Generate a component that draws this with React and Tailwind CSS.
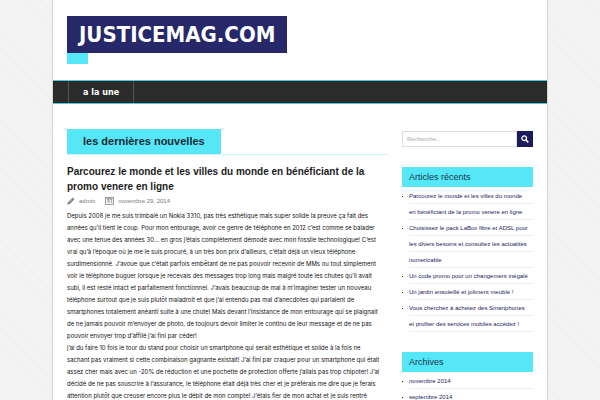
import React, { useState } from 'react';

const recentPosts = [
  'Parcourez le monde et les villes du monde en bénéficiant de la promo venere en ligne',
  'Choisissez le pack LaBox fibre et ADSL pour les divers besoins et consultez les actualités numericable',
  'Un code promo pour un changement inégalé',
  'Un jardin ensoleillé et joliment meublé !',
  'Vous cherchez à achetez des Smartphones et profiter des services mobiles accédez !',
];

const archives = ['novembre 2014', 'septembre 2014'];

function PencilIcon() {
  return (
    <svg viewBox="0 0 8 8" className="h-2 w-2" aria-hidden="true">
      <path d="M0.3 7.7 L1 5.3 L5.8 0.5 L7.5 2.2 L2.7 7 Z" fill="#777" />
      <path d="M1.6 6 L6.2 1.4" stroke="#ddd" strokeWidth="0.6" />
    </svg>
  );
}

function DateIcon() {
  return (
    <svg viewBox="0 0 9 8" className="h-2 w-[9px]" aria-hidden="true">
      <rect x="0.5" y="0.5" width="8" height="7" fill="#f2f2f2" stroke="#8a8a8a" strokeWidth="0.8" />
      <path d="M2 2.5 H4 V5.8 M2 4 H4 M5.2 2.5 H7 L6 5.8 M1.5 1.5 H7.5" fill="none" stroke="#888" strokeWidth="0.7" />
    </svg>
  );
}

function SearchIcon() {
  return (
    <svg viewBox="0 0 8 8" className="h-2 w-2" aria-hidden="true">
      <circle cx="3.2" cy="3.2" r="2.3" fill="none" stroke="#fff" strokeWidth="1.3" />
      <path d="M5 5 L7.3 7.3" stroke="#fff" strokeWidth="1.7" />
    </svg>
  );
}

function Widget({ title, items }) {
  return (
    <section>
      <h3 className="bg-[#55e7f7] px-[7px] text-[9px] leading-5 text-[#17364a]">{title}</h3>
      <ul className="mt-px">
        {items.map((item) => (
          <li key={item} className="flex text-[6px] leading-4">
            <span className="mt-2 mr-[6px] h-px w-px shrink-0 bg-[#222]"></span>
            <a
              href="#"
              className="grow bg-[repeating-linear-gradient(to_bottom,transparent_0px,transparent_15px,#f1f1f1_15px,#f1f1f1_16px)] pr-1 text-[#22225e]"
            >
              {item}
            </a>
          </li>
        ))}
      </ul>
    </section>
  );
}

function App() {
  const [search, setSearch] = useState('');

  return (
    <div className="h-screen overflow-hidden bg-[#f2f2f2] bg-[repeating-linear-gradient(45deg,#f5f5f5_0px,#f5f5f5_2px,#efefef_2px,#efefef_3px)] px-[52px] font-['Liberation_Sans',Arial,sans-serif]">
      <div className="min-h-full border-x border-[#d6d6d6] bg-white">
        <header className="px-[14px] pt-4">
          <h1 className="w-fit bg-[#26286a] px-3 font-['DejaVu_Sans_Condensed','DejaVu_Sans',sans-serif] text-[22px] leading-[37px] font-bold text-white">
            <a href="#">JUSTICEMAG.COM</a>
          </h1>
          <div className="h-[11px] w-[21px] bg-[#55e7f7]"></div>
        </header>

        <nav className="mt-4 flex border-y border-[#45cdda] bg-[#2b2b2b] pl-[15px]">
          <a
            href="#"
            className="border-x border-[#555] px-[14px] font-['DejaVu_Sans_Condensed','DejaVu_Sans',sans-serif] text-[9px] leading-[22px] font-bold text-white"
          >
            a la une
          </a>
        </nav>

        <div className="flex gap-[14px] px-[14px] pt-[25px]">
          <main className="min-w-0 flex-1">
            <div className="border-b border-[#c9f6fb]">
              <h2 className="w-fit bg-[#55e7f7] px-4 text-[11px] leading-[25px] font-bold text-[#142a33]">
                les dernières nouvelles
              </h2>
            </div>

            <article>
              <h2 className="mt-[9px] text-[10px] leading-[15px] font-bold text-[#1c1c1c]">
                <a href="#">Parcourez le monde et les villes du monde en bénéficiant de la promo venere en ligne</a>
              </h2>
              <div className="mt-px flex items-center text-[6px] leading-3 text-[#777]">
                <PencilIcon />
                <span className="ml-1">admin</span>
                <span className="ml-[10px]"><DateIcon /></span>
                <span className="ml-1">novembre 29, 2014</span>
              </div>
              <div className="mt-[3px] pr-[5px] font-[Inter,'Liberation_Sans',sans-serif] text-[6px] leading-3 text-[#111]">
                <p>
                  Depuis 2008 je me suis trimbalé un Nokia 3310, pas très esthétique mais super solide la preuve ça fait des
                  années qu’il tient le coup. Pour mon entourage, avoir ce genre de téléphone en 2012 c’est comme se balader
                  avec une tenue des années 30… en gros j’étais complètement démodé avec mon fossile technologique! C’est
                  vrai qu’à l’époque où je me le suis procuré, à un très bon prix d’ailleurs, c’était déjà un vieux téléphone
                  surdimensionné. J’avoue que c’était parfois embêtant de ne pas pouvoir recevoir de MMs ou tout simplement
                  voir le téléphone buguer lorsque je recevais des messages trop long mais malgré toute les chutes qu’il avait
                  subi, il est resté intact et parfaitement fonctionnel. J’avais beaucoup de mal à m’imaginer tester un nouveau
                  téléphone surtout que je suis plutôt maladroit et que j’ai entendu pas mal d’anecdotes qui parlaient de
                  smartphones totalement anéanti suite à une chute! Mais devant l’insistance de mon entourage qui se plaignait
                  de ne jamais pouvoir m’envoyer de photo, de toujours devoir limiter le continu de leur message et de ne pas
                  pouvoir envoyer trop d’affilé j’ai fini par céder!
                </p>
                <p>
                  j’ai du faire 10 fois le tour du stand pour choisir un smartphone qui serait esthétique et solide à la fois ne
                  sachant pas vraiment si cette combinaison gagnante existait! J’ai fini par craquer pour un smartphone qui était
                  assez cher mais avec un -20% de réduction et une pochette de protection offerte j’allais pas trop chipoter! J’ai
                  décidé de ne pas souscrire à l’assurance, le téléphone était déjà très cher et je préférais me dire que je ferais
                  attention plutôt que creuser encore plus le débit de mon compte! J’étais fier de mon achat et je suis rentré
                </p>
              </div>
            </article>
          </main>

          <aside className="w-[131px] shrink-0 pt-[2px]">
            <form className="flex" onSubmit={(e) => e.preventDefault()}>
              <input
                type="text"
                aria-label="Recherche"
                placeholder="Recherche..."
                value={search}
                onChange={(e) => setSearch(e.target.value)}
                className="h-4 min-w-0 flex-1 border border-[#ddd] px-1 text-[6px] text-[#555] outline-none placeholder:text-[#aaa]"
              />
              <button
                type="submit"
                aria-label="Rechercher"
                className="flex h-4 w-4 items-center justify-center bg-[#1b1b5c]"
              >
                <SearchIcon />
              </button>
            </form>

            <div className="mt-5 flex flex-col gap-5">
              <Widget title="Articles récents" items={recentPosts} />
              <Widget title="Archives" items={archives} />
            </div>
          </aside>
        </div>
      </div>
    </div>
  );
}

export default App;
